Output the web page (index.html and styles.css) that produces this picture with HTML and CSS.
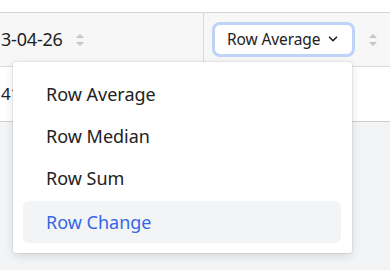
FILE: index.html
```html
<!DOCTYPE html>
<html lang="en">
<head>
  <meta charset="UTF-8" />
  <meta name="viewport" content="width=device-width, initial-scale=1.0"/>
  <title>Row summary</title>
  <link rel="stylesheet" href="styles.css">
</head>
<body>
  <div class="sheet">
    <div class="strip"></div>
    <div class="row row-head">
      <div class="cell cell-date">
        <span class="value">3-04-26</span>
        <span class="sort"><i class="up"></i><i class="down"></i></span>
      </div>
      <div class="cell cell-agg">
        <button class="select">Row Average
          <svg width="10" height="6" viewBox="0 0 10 6"><path d="M1.5 1.2l3.5 3.5 3.5-3.5" fill="none" stroke="#222" stroke-width="1.6" stroke-linecap="round" stroke-linejoin="round"/></svg>
        </button>
        <span class="sort"><i class="up"></i><i class="down"></i></span>
      </div>
    </div>
    <div class="row row-body">
      <div class="cell cell-date"><span class="value">41</span></div>
      <div class="cell"></div>
    </div>
  </div>

  <ul class="menu">
    <li>Row Average</li>
    <li>Row Median</li>
    <li>Row Sum</li>
    <li class="active">Row Change</li>
  </ul>
</body>
</html>
```

FILE: styles.css
```css
* { box-sizing: border-box; }
body {
  margin: 0;
  font-family: "Noto Sans", sans-serif;
  background: #f3f4f6;
  color: #222;
  position: relative;
  height: 270px;
  overflow: hidden;
}
.sheet { background: #fff; }
.strip {
  height: 13px;
  border-bottom: 1px solid #d6d6d6;
}
.row {
  display: grid;
  grid-template-columns: 204px 1fr;
}
.row-head {
  height: 54px;
  background: #f7f7f7;
  border-bottom: 1px solid #dadada;
}
.row-body {
  height: 55px;
  border-bottom: 1px solid #cfcfcf;
}
.cell {
  display: flex;
  align-items: center;
  overflow: hidden;
}
.cell-date { border-right: 1px solid #dadada; }
.value {
  font-size: 18px;
  margin-left: 1px;
  white-space: nowrap;
  letter-spacing: -0.2px;
}
.row-head .value { margin-top: -2px; }
.row-body .value { margin-top: -2px; font-size: 17px; }
.sort {
  display: flex;
  flex-direction: column;
  gap: 4px;
  margin-left: 13px;
}
.sort i {
  width: 0;
  height: 0;
  border-left: 4px solid transparent;
  border-right: 4px solid transparent;
}
.sort .up { border-bottom: 4px solid #c6c6c6; }
.sort .down { border-top: 4px solid #c6c6c6; }
.cell-agg { padding-left: 8px; }
.cell-agg .sort { margin-left: 14px; }
.select {
  display: flex;
  align-items: center;
  gap: 8px;
  width: 143px;
  height: 35px;
  padding: 0 0 1px 12px;
  background: #fff;
  border: 3px solid #bdd3f8;
  border-radius: 8px;
  font-family: inherit;
  font-size: 15.5px;
  letter-spacing: -0.1px;
  color: #222;
}
.menu {
  position: absolute;
  left: 13px;
  top: 62px;
  width: 339px;
  height: 191px;
  margin: 0;
  padding: 11px 11px 10px 10px;
  list-style: none;
  background: #fff;
  border-radius: 3px;
  box-shadow: 0 0 0 1px rgba(0,0,0,.05), 0 3px 10px rgba(0,0,0,.12);
}
.menu li {
  height: 42px;
  display: flex;
  align-items: center;
  padding-left: 23px;
  font-size: 18px;
  border-radius: 6px;
}
.menu li.active {
  background: #f3f4f6;
  color: #3567e4;
  margin-top: 2px;
}
```
